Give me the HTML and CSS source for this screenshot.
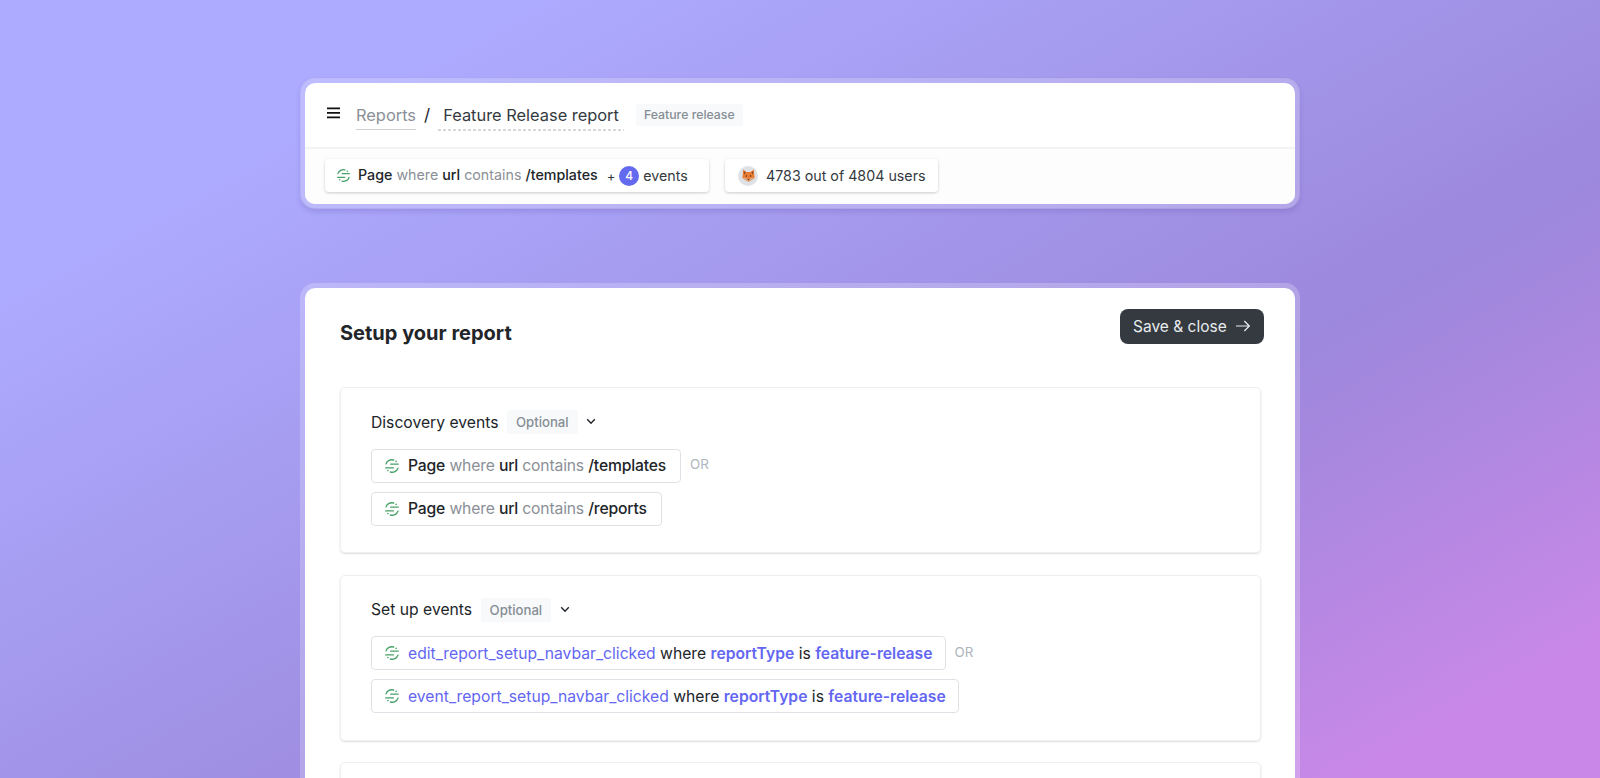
FILE: index.html
```html
<!DOCTYPE html>
<html lang="en">
<head>
    <meta charset="UTF-8">
    <meta name="viewport" content="width=device-width, initial-scale=1.0">
    <title>Feature Release report</title>
    <link rel="stylesheet" href="styles.css">
</head>
<body>
    <!-- shared icons -->
    <svg class="sprite" aria-hidden="true">
        <symbol id="segment" viewBox="0 0 14 14">
            <g fill="none" stroke="currentColor" stroke-width="1.35" stroke-linecap="round">
                <path d="M1 4.9A6.2 6.2 0 0 1 8.6 1M13 9.1A6.2 6.2 0 0 1 5.4 13"/>
                <path d="M5.6 5.1H13.3M.7 8.9H8.4"/>
            </g>
            <circle cx="11.1" cy="2.4" r=".8" fill="currentColor"/>
            <circle cx="2.9" cy="11.6" r=".8" fill="currentColor"/>
        </symbol>
        <symbol id="chevron" viewBox="0 0 10 7">
            <path d="M1.2 1.3L5 5.2L8.8 1.3" fill="none" stroke="currentColor" stroke-width="1.4"/>
        </symbol>
    </svg>

    <div class="page">
        <header class="panel navbar">
            <div class="nav-top">
                <svg class="menu-icon" viewBox="0 0 13 12"><path d="M0 1.3H13M0 5.8H13M0 10.3H13" stroke="#111" stroke-width="1.8"/></svg>
                <a class="crumb">Reports</a>
                <span class="slash">/</span>
                <span class="report-name">Feature Release report</span>
                <span class="tag nav-tag">Feature release</span>
            </div>
            <div class="nav-bottom">
                <div class="chip events-chip">
                    <svg class="segment-icon"><use href="#segment"/></svg>
                    <span class="chip-text"><b>Page</b> <i>where</i> <b>url</b> <i>contains</i> <b>/templates</b></span>
                    <span class="plus">+</span>
                    <span class="count">4</span>
                    <span>events</span>
                </div>
                <div class="chip users-chip">
                    <span class="avatar">
                        <svg viewBox="0 0 14 14">
                            <path d="M1.2 .6L4.8 3.2H9.2L12.8 .6L13.2 6.5L13.6 9.4L10.8 11.6L7 13.6L3.2 11.6L.4 9.4L.8 6.5Z" fill="#ea7b30"/>
                            <path d="M2 2.4L4 4L2.2 6ZM12 2.4L10 4L11.8 6Z" fill="#75492f"/>
                            <path d="M.4 9.4L3.6 9.4L6 10.6L7 13.6L3.2 11.6ZM13.6 9.4L10.4 9.4L8 10.6L7 13.6L10.8 11.6Z" fill="#d9a983"/>
                            <circle cx="4.7" cy="7.5" r=".8" fill="#4a3028"/>
                            <circle cx="9.3" cy="7.5" r=".8" fill="#4a3028"/>
                            <path d="M5.9 10.8H8.1L7 12.2Z" fill="#4a3028"/>
                        </svg>
                    </span>
                    <span>4783 out of 4804 users</span>
                </div>
            </div>
        </header>

        <main class="panel setup">
            <div class="setup-header">
                <h1>Setup your report</h1>
                <button class="save" type="button">Save &amp; close
                    <svg viewBox="0 0 14 12"><path d="M0 6H13.2M8.3 1L13.3 6L8.3 11" fill="none" stroke="currentColor" stroke-width="1.2"/></svg>
                </button>
            </div>

            <section class="card">
                <div class="card-title">
                    <h2>Discovery events</h2>
                    <span class="tag">Optional</span>
                    <svg class="chevron"><use href="#chevron"/></svg>
                </div>
                <div class="rule-row">
                    <div class="rule">
                        <svg class="segment-icon"><use href="#segment"/></svg>
                        <span class="page-rule"><b>Page</b> <i>where</i> <b>url</b> <i>contains</i> <b>/templates</b></span>
                    </div>
                    <span class="or">OR</span>
                </div>
                <div class="rule-row">
                    <div class="rule">
                        <svg class="segment-icon"><use href="#segment"/></svg>
                        <span class="page-rule"><b>Page</b> <i>where</i> <b>url</b> <i>contains</i> <b>/reports</b></span>
                    </div>
                </div>
            </section>

            <section class="card">
                <div class="card-title">
                    <h2>Set up events</h2>
                    <span class="tag">Optional</span>
                    <svg class="chevron"><use href="#chevron"/></svg>
                </div>
                <div class="rule-row">
                    <div class="rule">
                        <svg class="segment-icon"><use href="#segment"/></svg>
                        <span><span class="event">edit_report_setup_navbar_clicked</span> where <strong>reportType</strong> is <strong>feature-release</strong></span>
                    </div>
                    <span class="or">OR</span>
                </div>
                <div class="rule-row">
                    <div class="rule">
                        <svg class="segment-icon"><use href="#segment"/></svg>
                        <span><span class="event">event_report_setup_navbar_clicked</span> where <strong>reportType</strong> is <strong>feature-release</strong></span>
                    </div>
                </div>
            </section>

            <section class="card card-last"></section>
        </main>
    </div>
</body>
</html>
```
FILE: styles.css
```css
* {
    box-sizing: border-box;
}
body {
    margin: 0;
    height: 778px;
    overflow: hidden;
    font-family: Inter, "Liberation Sans", sans-serif;
    color: #212529;
    background: linear-gradient(151deg, #adabff 0%, #adabff 17.5%, #9c88dc 64%, #c988e7 92%, #c988e7 100%);
}
.sprite {
    display: none;
}
.page {
    width: 1000px;
    margin: 0 auto;
    padding-top: 78px;
}
.panel {
    background-color: #fff;
    background-clip: padding-box;
    border: 5px solid rgba(255, 255, 255, 0.22);
    border-radius: 15px;
}
.navbar {
    height: 131px;
    margin-bottom: 74px;
    box-shadow: 0 3px 5px rgba(70, 50, 140, 0.16);
}
.nav-top {
    display: flex;
    align-items: center;
    height: 66px;
    padding-left: 22px;
    border-bottom: 2px solid #f3f3f4;
}
.menu-icon {
    width: 13px;
    height: 12px;
    margin: 0 16px 5px 0;
}
.crumb, .report-name {
    font-size: 16.4px;
    line-height: 27px;
}
.crumb {
    margin-top: 1px;
    color: #8b8f98;
    border-bottom: 1px solid #cfd0d4;
}
.slash {
    font-size: 17px;
    margin: 0 8px;
}
.report-name {
    padding: 2px 5px;
    color: #343a40;
    background: repeating-linear-gradient(90deg, #d6d8dc 0, #d6d8dc 3px, transparent 3px, transparent 5px) bottom / 100% 2px no-repeat;
}
.tag {
    background-color: #f8f9fa;
    color: #868e96;
    font-weight: 500;
    border-radius: 2px;
}
.nav-tag {
    margin-left: 12px;
    padding: 0 8px;
    font-size: 12.3px;
    line-height: 22px;
}
.nav-bottom {
    display: flex;
    gap: 16px;
    height: 55px;
    padding: 10px 20px;
    background-color: #fdfdfd;
    border-radius: 0 0 10px 10px;
}
.chip {
    display: flex;
    align-items: center;
    height: 33px;
    font-size: 14.25px;
    background-color: #fff;
    color: #343a40;
    border-radius: 4px;
    box-shadow: 0 1px 3px rgba(0, 0, 0, 0.2);
}
.segment-icon {
    width: 14px;
    height: 14px;
    flex: none;
    color: #48a167;
}
.events-chip {
    width: 384px;
    padding-left: 12px;
}
.events-chip .segment-icon {
    width: 13px;
    height: 13px;
    margin-right: 8px;
}
.chip-text {
    margin-bottom: 2px;
}
b {
    color: #212529;
    font-weight: 500;
}
i {
    font-style: normal;
    color: #8b8f96;
}
.plus {
    margin: 0 4px 0 9px;
    font-size: 13px;
}
.count {
    width: 20px;
    height: 20px;
    margin-right: 4px;
    border-radius: 50%;
    background-color: #636aef;
    color: #fff;
    font-size: 12px;
    font-weight: 500;
    line-height: 20px;
    text-align: center;
}
.users-chip {
    padding: 0 12px 0 13px;
}
.avatar {
    display: flex;
    align-items: center;
    justify-content: center;
    width: 20px;
    height: 20px;
    margin-right: 8px;
    border-radius: 50%;
    background-color: #dee1e5;
}
.avatar svg {
    width: 13px;
    height: 13px;
}
/* runs off the bottom of the page */
.setup {
    height: 495px;
    padding: 21px 34px 0 35px;
    overflow: hidden;
    border-bottom: none;
    border-radius: 15px 15px 0 0;
}
.setup-header {
    display: flex;
    justify-content: space-between;
    height: 78px;
}
h1 {
    margin: 10px 0 0;
    font-size: 20px;
    line-height: 28px;
    font-weight: 700;
}
.save {
    display: flex;
    align-items: center;
    gap: 9px;
    width: 144px;
    height: 35px;
    margin-right: -3px;
    padding: 0 0 1px 13px;
    border: none;
    border-radius: 8px;
    background-color: #343a40;
    color: #e9ecef;
    font-family: inherit;
    font-size: 15.5px;
}
.save svg {
    width: 14px;
    height: 12px;
}
.card {
    height: 166px;
    margin-bottom: 21.5px;
    padding: 22px 30px;
    border: 1px solid #efeff0;
    border-radius: 5px;
    box-shadow: 0 1px 2px rgba(0, 0, 0, 0.14);
}
.card-last {
    height: 40px;
    margin-bottom: 0;
}
.card-title {
    display: flex;
    align-items: center;
    height: 24px;
    margin-bottom: 14.5px;
}
h2 {
    margin: 0;
    font-size: 15.7px;
    font-weight: 400;
}
.card-title .tag {
    margin: 0 8.5px;
    padding: 0 9px;
    font-size: 13.15px;
    line-height: 24px;
}
.chevron {
    width: 10px;
    height: 7px;
    margin-bottom: 1px;
}
.rule-row {
    display: flex;
    align-items: center;
    margin-bottom: 9px;
}
.rule {
    display: flex;
    align-items: center;
    gap: 9px;
    height: 34px;
    padding: 0 12px 0 13px;
    border: 1px solid #dee2e6;
    border-radius: 4px;
    font-size: 15.7px;
}
.page-rule {
    margin-right: 2px;
    letter-spacing: -0.17px;
}
.or {
    margin: 0 0 3px 9px;
    color: #adb5bd;
    font-size: 13.3px;
}
.event {
    color: #6366f1;
}
strong {
    color: #6366f1;
    font-weight: 600;
}
```
